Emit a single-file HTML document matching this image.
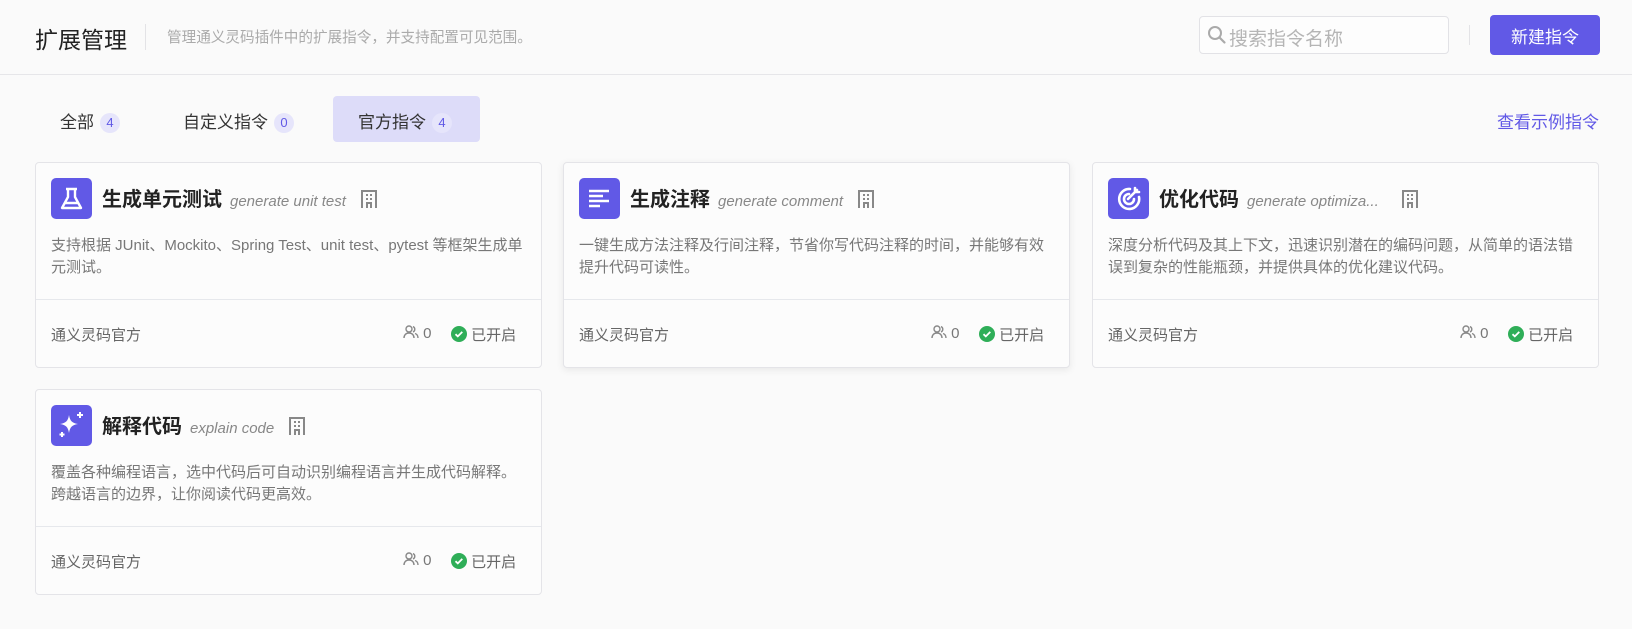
<!DOCTYPE html>
<html><head><meta charset="utf-8">
<style>
*{box-sizing:border-box;margin:0;padding:0}
body{width:1632px;height:629px;background:#fafafa;font-family:"Liberation Sans","Noto Sans CJK SC",sans-serif;position:relative;overflow:hidden;color:#333}
.a{position:absolute;white-space:nowrap}
.hdr{position:absolute;left:0;top:0;width:1632px;height:75px;border-bottom:1px solid #e6e6e9}
.card{position:absolute;width:507px;height:206px;background:#fcfcfc;border:1px solid #e4e4e8;border-radius:4px}
.card.sh{box-shadow:0 2px 8px rgba(0,0,0,.08)}
.ic{position:absolute;left:15px;top:15px;width:41px;height:41px;border-radius:5px;background:#6159e6}
.ic svg{position:absolute;left:0;top:0}
.tt{position:absolute;left:66px;top:20px;font-size:20px;font-weight:bold;color:#222;white-space:nowrap}
.en{font-style:italic;font-weight:normal;font-size:15px;color:#888;margin-left:8px}
.bd{display:inline-block;vertical-align:-3px;margin-left:14px}
.ds{position:absolute;left:15px;top:72px;width:470px;font-size:15px;line-height:22px;color:#777}
.dv{position:absolute;left:0;right:0;top:136px;border-top:1px solid #e6e8ec}
.ft{position:absolute;left:15px;top:161px;font-size:15px;color:#666}
.us{position:absolute;left:367px;top:162px;font-size:15px;color:#777}
.st{position:absolute;left:415px;top:161px;font-size:15px;color:#666}
.badge{display:inline-block;width:20px;height:20px;border-radius:10px;background:#e6e5fb;color:#6159e6;font-size:13px;text-align:center;line-height:20px;margin-left:6px;vertical-align:1px}
</style></head><body>
<div class="hdr"></div>
<div class="a" style="left:35px;top:21px;font-size:23px;color:#222">扩展管理</div>
<div class="a" style="left:145px;top:24px;width:1px;height:26px;background:#e3e3e6"></div>
<div class="a" style="left:167px;top:26px;font-size:14.6px;color:#aaa">管理通义灵码插件中的扩展指令，并支持配置可见范围。</div>
<div class="a" style="left:1199px;top:16px;width:250px;height:38px;border:1px solid #e2e2e6;border-radius:4px;background:#fdfdfd"></div>
<svg class="a" style="left:1207px;top:25px" width="20" height="20" viewBox="0 0 20 20"><circle cx="8" cy="8" r="6" fill="none" stroke="#aaa" stroke-width="2"/><path d="M12.5 12.5L17.5 17.5" stroke="#aaa" stroke-width="2.2" stroke-linecap="round"/></svg>
<div class="a" style="left:1229px;top:24px;font-size:19px;color:#b5b5b5">搜索指令名称</div>
<div class="a" style="left:1469px;top:25px;width:1px;height:20px;background:#e3e3e6"></div>
<div class="a" style="left:1490px;top:15px;width:110px;height:40px;border-radius:4px;background:#6159e6;color:#fff;font-size:17px;display:flex;align-items:center;justify-content:center">新建指令</div>

<div class="a" style="left:333px;top:96px;width:147px;height:46px;border-radius:4px;background:#dddcf9"></div>
<div class="a" style="left:60px;top:108px;font-size:17px;color:#333">全部<span class="badge">4</span></div>
<div class="a" style="left:183px;top:108px;font-size:17px;color:#333">自定义指令<span class="badge">0</span></div>
<div class="a" style="left:358px;top:108px;font-size:17px;color:#333">官方指令<span class="badge">4</span></div>
<div class="a" style="left:1497px;top:108px;font-size:17px;color:#6159e6">查看示例指令</div>

<!-- card1 -->
<div class="card" style="left:35px;top:162px">
<div class="ic"><svg width="41" height="41" viewBox="0 0 41 41"><path d="M15 11h11M17 11v8l-6 11h19l-6-11v-8M13 25h15" fill="none" stroke="#fff" stroke-width="2.4" stroke-linejoin="round"/></svg></div>
<div class="tt">生成单元测试<span class="en">generate unit test</span><svg class="bd" width="18" height="20" viewBox="0 0 18 20"><path d="M2 19V2h14v17M6 6h2M10 6h2M6 10h2M10 10h2M7 19v-5h4v5" fill="none" stroke="#888" stroke-width="2"/></svg></div>
<div class="ds" style="white-space:nowrap">支持根据 JUnit、Mockito、Spring Test、unit test、pytest 等框架生成单<br>元测试。</div>
<div class="dv"></div>
<div class="ft">通义灵码官方</div>
<div class="us"><svg width="16" height="14" viewBox="0 0 16 14" style="vertical-align:-1px"><circle cx="6" cy="4" r="3" fill="none" stroke="#888" stroke-width="1.4"/><path d="M1 13c0-3 2-5 5-5s5 2 5 5M10 1.5a3 3 0 010 5.5M12 8.5c2 .6 3 2.3 3 4.5" fill="none" stroke="#888" stroke-width="1.4"/></svg> 0</div>
<div class="st"><svg width="16" height="16" viewBox="0 0 16 16" style="vertical-align:-2px"><circle cx="8" cy="8" r="8" fill="#2fae58"/><path d="M4.5 8.2l2.3 2.2 4.5-4.5" fill="none" stroke="#fff" stroke-width="1.8"/></svg> 已开启</div>
</div>

<!-- card2 -->
<div class="card sh" style="left:563px;top:162px">
<div class="ic"><svg width="41" height="41" viewBox="0 0 41 41"><path d="M10 13h20M10 18h14M10 23h20M10 28h11" stroke="#fff" stroke-width="2.6"/></svg></div>
<div class="tt">生成注释<span class="en">generate comment</span><svg class="bd" width="18" height="20" viewBox="0 0 18 20"><path d="M2 19V2h14v17M6 6h2M10 6h2M6 10h2M10 10h2M7 19v-5h4v5" fill="none" stroke="#888" stroke-width="2"/></svg></div>
<div class="ds" style="white-space:nowrap">一键生成方法注释及行间注释，节省你写代码注释的时间，并能够有效<br>提升代码可读性。</div>
<div class="dv"></div>
<div class="ft">通义灵码官方</div>
<div class="us"><svg width="16" height="14" viewBox="0 0 16 14" style="vertical-align:-1px"><circle cx="6" cy="4" r="3" fill="none" stroke="#888" stroke-width="1.4"/><path d="M1 13c0-3 2-5 5-5s5 2 5 5M10 1.5a3 3 0 010 5.5M12 8.5c2 .6 3 2.3 3 4.5" fill="none" stroke="#888" stroke-width="1.4"/></svg> 0</div>
<div class="st"><svg width="16" height="16" viewBox="0 0 16 16" style="vertical-align:-2px"><circle cx="8" cy="8" r="8" fill="#2fae58"/><path d="M4.5 8.2l2.3 2.2 4.5-4.5" fill="none" stroke="#fff" stroke-width="1.8"/></svg> 已开启</div>
</div>

<!-- card3 -->
<div class="card" style="left:1092px;top:162px">
<div class="ic"><svg width="41" height="41" viewBox="0 0 41 41"><path d="M22 11a10 10 0 1 0 9 8M21 16a5 5 0 1 0 5 5M20 21l9-9M27 10v4h4" fill="none" stroke="#fff" stroke-width="2.6" stroke-linecap="round"/></svg></div>
<div class="tt">优化代码<span class="en">generate optimiza...</span><svg class="bd" width="18" height="20" viewBox="0 0 18 20" style="margin-left:22px"><path d="M2 19V2h14v17M6 6h2M10 6h2M6 10h2M10 10h2M7 19v-5h4v5" fill="none" stroke="#888" stroke-width="2"/></svg></div>
<div class="ds" style="white-space:nowrap">深度分析代码及其上下文，迅速识别潜在的编码问题，从简单的语法错<br>误到复杂的性能瓶颈，并提供具体的优化建议代码。</div>
<div class="dv"></div>
<div class="ft">通义灵码官方</div>
<div class="us"><svg width="16" height="14" viewBox="0 0 16 14" style="vertical-align:-1px"><circle cx="6" cy="4" r="3" fill="none" stroke="#888" stroke-width="1.4"/><path d="M1 13c0-3 2-5 5-5s5 2 5 5M10 1.5a3 3 0 010 5.5M12 8.5c2 .6 3 2.3 3 4.5" fill="none" stroke="#888" stroke-width="1.4"/></svg> 0</div>
<div class="st"><svg width="16" height="16" viewBox="0 0 16 16" style="vertical-align:-2px"><circle cx="8" cy="8" r="8" fill="#2fae58"/><path d="M4.5 8.2l2.3 2.2 4.5-4.5" fill="none" stroke="#fff" stroke-width="1.8"/></svg> 已开启</div>
</div>

<!-- card4 -->
<div class="card" style="left:35px;top:389px">
<div class="ic"><svg width="41" height="41" viewBox="0 0 41 41"><path d="M18 10c1 6 3 8 9 9-6 1-8 3-9 9-1-6-3-8-9-9 6-1 8-3 9-9z" fill="#fff"/><path d="M29 7v6M26 10h6M11 27v5M8.5 29.5h5" stroke="#fff" stroke-width="2"/></svg></div>
<div class="tt">解释代码<span class="en">explain code</span><svg class="bd" width="18" height="20" viewBox="0 0 18 20"><path d="M2 19V2h14v17M6 6h2M10 6h2M6 10h2M10 10h2M7 19v-5h4v5" fill="none" stroke="#888" stroke-width="2"/></svg></div>
<div class="ds" style="white-space:nowrap">覆盖各种编程语言，选中代码后可自动识别编程语言并生成代码解释。<br>跨越语言的边界，让你阅读代码更高效。</div>
<div class="dv"></div>
<div class="ft">通义灵码官方</div>
<div class="us"><svg width="16" height="14" viewBox="0 0 16 14" style="vertical-align:-1px"><circle cx="6" cy="4" r="3" fill="none" stroke="#888" stroke-width="1.4"/><path d="M1 13c0-3 2-5 5-5s5 2 5 5M10 1.5a3 3 0 010 5.5M12 8.5c2 .6 3 2.3 3 4.5" fill="none" stroke="#888" stroke-width="1.4"/></svg> 0</div>
<div class="st"><svg width="16" height="16" viewBox="0 0 16 16" style="vertical-align:-2px"><circle cx="8" cy="8" r="8" fill="#2fae58"/><path d="M4.5 8.2l2.3 2.2 4.5-4.5" fill="none" stroke="#fff" stroke-width="1.8"/></svg> 已开启</div>
</div>
</body></html>
